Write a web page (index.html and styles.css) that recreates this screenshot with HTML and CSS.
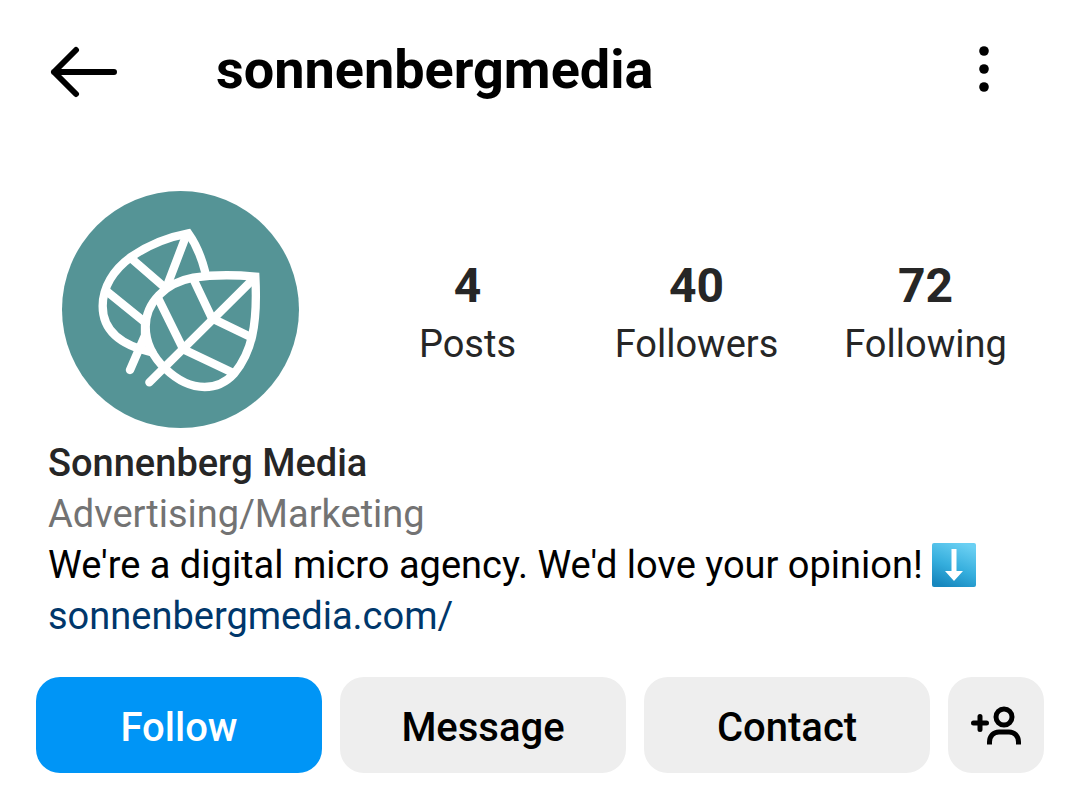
FILE: index.html
```html
<!DOCTYPE html>
<html lang="en">
    <head>
        <meta charset="UTF-8">
        <meta name="viewport" content="width=device-width, initial-scale=1.0">
        <title>sonnenbergmedia</title>
        <link rel="stylesheet" href="styles.css">
    </head>
    <body>
        <header class="topbar">
            <button type="button" class="icon-btn" aria-label="Back">
                <svg width="68" height="56" viewBox="0 0 68 56" fill="none" stroke="#000" stroke-width="6" stroke-linecap="round" stroke-linejoin="round">
                    <path d="M64 30H4M26 8L4 30L26 52"/>
                </svg>
            </button>
            <h1 class="username">sonnenbergmedia</h1>
            <button type="button" class="icon-btn" aria-label="More options">
                <svg width="12" height="48" viewBox="0 0 12 48">
                    <circle cx="6" cy="5" r="4.8"/>
                    <circle cx="6" cy="23" r="4.8"/>
                    <circle cx="6" cy="41" r="4.8"/>
                </svg>
            </button>
        </header>

        <main>
            <section class="summary">
                <svg class="avatar" viewBox="36 33 711 711" role="img" aria-label="Sonnenberg Media logo">
                    <circle cx="391.5" cy="388.5" r="355.5" fill="#559496"/>
                    <g fill="none" stroke="#fff" stroke-width="25" stroke-linecap="round" stroke-linejoin="miter">
                        <!-- back leaf -->
                        <path d="M465 274C454 231 438 192 415 160C350 172 290 198 243 231C190 269 158 322 158 378C158 452 212 496 307 517"/>
                        <path d="M408 168L354 310M285 430V466L240 570"/>
                        <path d="M247 238L344 322M170 334L284 426"/>
                        <!-- front leaf -->
                        <path d="M616 290C552 284 488 284 430 293C344 309 287 369 287 440C287 491 310 532 347 567C387 605 427 621 464 621C503 621 531 604 553 580C603 520 624 440 616 290Z"/>
                        <path d="M610 297L298 607"/>
                        <path d="M430 297L486 415L602 471M326 358L400 508L545 577"/>
                    </g>
                </svg>
                <ul class="stats">
                    <li><strong>4</strong><span>Posts</span></li>
                    <li><strong>40</strong><span>Followers</span></li>
                    <li><strong>72</strong><span>Following</span></li>
                </ul>
            </section>

            <section class="bio">
                <h2 class="name">Sonnenberg Media</h2>
                <p class="category">Advertising/Marketing</p>
                <p class="about">We're a digital micro agency. We'd love your opinion!
                    <svg class="emoji" viewBox="0 0 44 44" role="img" aria-label="Down arrow">
                        <defs>
                            <linearGradient id="sky" x1="0.7" y1="0" x2="0.3" y2="1">
                                <stop offset="0" stop-color="#6bd0f3"/>
                                <stop offset="0.55" stop-color="#35aedd"/>
                                <stop offset="1" stop-color="#1787be"/>
                            </linearGradient>
                        </defs>
                        <rect width="44" height="44" rx="2" fill="url(#sky)"/>
                        <path d="M19.500 6H24.500V28H31L22 38L13 28H19.500Z" fill="#fff"/>
                    </svg>
                </p>
                <a class="website" href="#">sonnenbergmedia.com/</a>
            </section>

            <div class="actions">
                <button type="button" class="btn btn-primary">Follow</button>
                <button type="button" class="btn">Message</button>
                <button type="button" class="btn">Contact</button>
                <button type="button" class="btn btn-icon" aria-label="Suggested accounts">
                    <svg width="52" height="44" viewBox="0 0 52 44" fill="none" stroke="#000" stroke-width="5" stroke-linecap="round">
                        <path d="M3.500 18H16.500M10 11.500V24.500"/>
                        <circle cx="34" cy="12" r="8"/>
                        <path stroke-linecap="butt" d="M19.500 39.500V37C19.500 31 23.500 27 29 27H39C44.500 27 48.500 31 48.500 37V39.500"/>
                    </svg>
                </button>
            </div>
        </main>
    </body>
</html>
```

FILE: styles.css
```css
* {
    box-sizing: border-box;
}

body {
    font-family: Roboto, "Liberation Sans", sans-serif;
    background-color: #fff;
    color: #000;
    margin: 0;
    padding: 0;
}

h1,
h2,
p {
    margin: 0;
}

button {
    font-family: inherit;
    border: none;
    cursor: pointer;
}

.topbar {
    display: flex;
    align-items: center;
    padding: 36px 90px 0 50px;
}

.icon-btn {
    display: flex;
    padding: 0;
    background: none;
}

.username {
    flex: 1;
    margin-left: 98px;
    font-size: 54px;
    line-height: 68px;
    font-weight: 700;
}

.summary {
    display: flex;
    align-items: center;
    gap: 54px;
    padding: 87px 40px 0 62px;
}

.avatar {
    flex: none;
    width: 237px;
    height: 237px;
}

.stats {
    flex: 1;
    display: grid;
    grid-template-columns: repeat(3, 1fr);
    margin: 0;
    padding: 8px 0 0;
    list-style: none;
    text-align: center;
    color: #262626;
}

.stats strong,
.stats span {
    display: block;
}

.stats strong {
    font-size: 48px;
    line-height: 60px;
}

.stats span {
    font-size: 38px;
    line-height: 56px;
}

.bio {
    padding: 10px 48px 0;
    font-size: 38px;
    line-height: 51px;
}

.name {
    font-size: 38px;
    font-weight: 500;
    color: #262626;
}

.category {
    color: #737373;
}

.emoji {
    width: 44px;
    height: 44px;
    vertical-align: -9px;
}

.website {
    color: #00376b;
    text-decoration: none;
}

.website:hover {
    text-decoration: underline;
}

.actions {
    display: flex;
    gap: 18px;
    padding: 35px 36px 30px;
}

.btn {
    flex: 1;
    height: 96px;
    padding: 4px 0 0;
    border-radius: 24px;
    background-color: #eee;
    color: #000;
    font-size: 40px;
    font-weight: 500;
}

.btn-primary {
    background-color: #0095f6;
    color: #fff;
}

.btn-icon {
    flex: none;
    display: flex;
    align-items: center;
    justify-content: center;
    width: 96px;
}
```
